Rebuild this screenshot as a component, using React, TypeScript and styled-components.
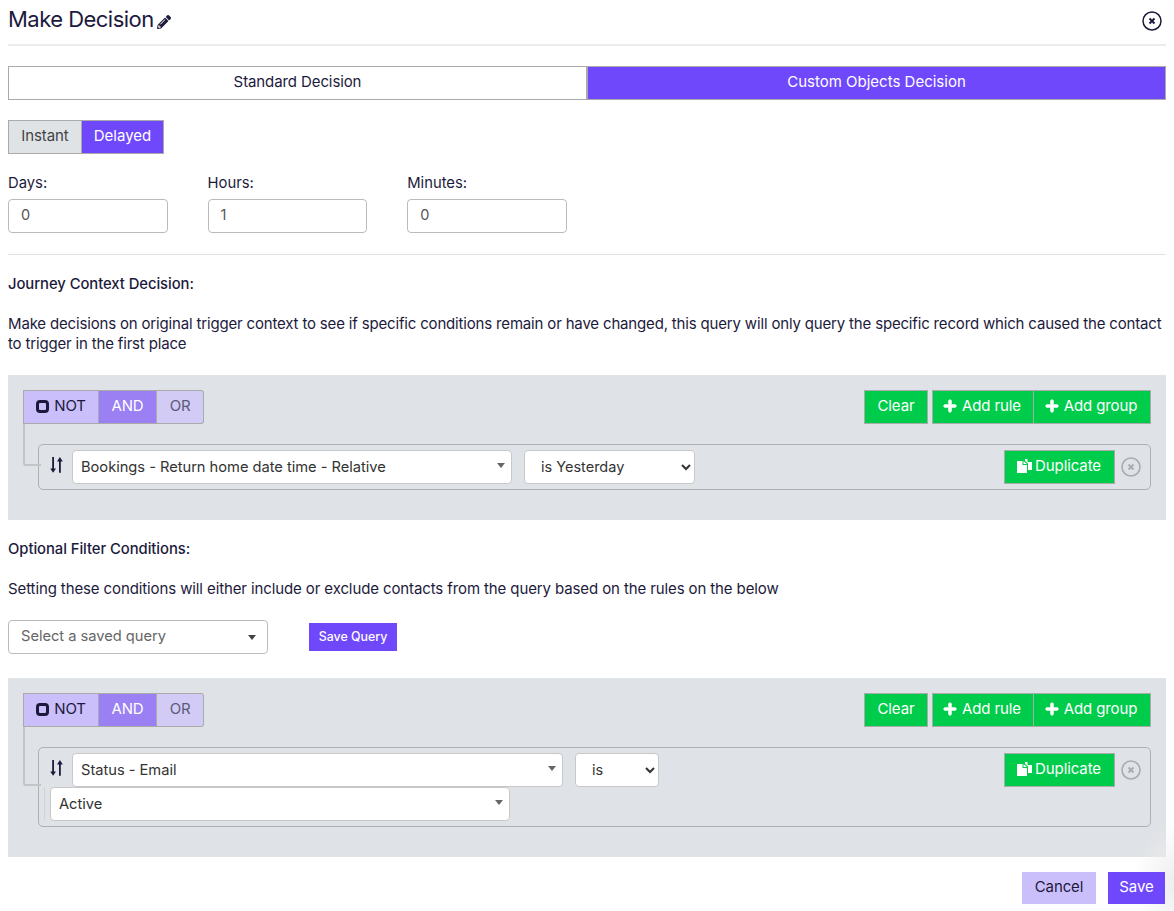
import * as React from 'react';
import styled, { createGlobalStyle } from 'styled-components';
import { FaPencilAlt, FaPlus } from 'react-icons/fa';

const GlobalStyle = createGlobalStyle`
  html, body {
    margin: 0;
    background: #fff;
  }
  body {
    font-family: Inter, "Liberation Sans", sans-serif;
    font-size: 15px;
    color: #1c1a3c;
  }
  * {
    box-sizing: border-box;
  }
`;

const Page = styled.div`
  position: relative;
  width: 1174px;
  height: 911px;
  padding: 0 8px;
  overflow: hidden;

  /* faint shade in the bottom right corner */
  &::after {
    content: '';
    position: absolute;
    right: 0;
    bottom: 0;
    width: 40px;
    height: 90px;
    background: radial-gradient(ellipse at 100% 70%, #eeeeee 0%, rgba(238, 238, 238, 0) 70%);
    pointer-events: none;
  }
`;

const TitleBar = styled.div`
  height: 46px;
  display: flex;
  align-items: flex-start;
  justify-content: space-between;
  border-bottom: 2px solid #ececec;
  padding-top: 5px;
`;

const Title = styled.h1`
  margin: 0;
  font-size: 22px;
  line-height: 28px;
  font-weight: 400;
  letter-spacing: -0.53px;
  display: flex;
  align-items: center;
  gap: 3px;

  svg {
    width: 14px;
    height: 14px;
    margin-top: 5px;
  }
`;

const CloseIcon = styled.svg`
  display: block;
  width: 20px;
  height: 20px;
  margin: 6px 4px 0 0;
`;

const Tabs = styled.div`
  display: flex;
  margin-top: 20px;
`;

const Tab = styled.div<{ $active?: boolean }>`
  flex: 1;
  height: 34px;
  padding-bottom: 3px;
  display: flex;
  align-items: center;
  justify-content: center;
  border: 1px solid #aaa;
  font-size: 15px;
  letter-spacing: ${p => (p.$active ? '0' : '-0.1px')};
  background: ${p => (p.$active ? '#7048fb' : '#fff')};
  color: ${p => (p.$active ? '#fff' : '#1c1a3c')};
`;

const Segments = styled.div`
  display: flex;
  margin-top: 20px;
`;

const Segment = styled.div<{ $active?: boolean }>`
  height: 34px;
  width: ${p => (p.$active ? '82px' : '74px')};
  padding-bottom: 3px;
  display: flex;
  align-items: center;
  justify-content: center;
  border: 1px solid #aaa;
  border-left-width: ${p => (p.$active ? '0' : '1px')};
  font-size: 15px;
  letter-spacing: ${p => (p.$active ? '0' : '-0.1px')};
  background: ${p => (p.$active ? '#7048fb' : '#dfe3e6')};
  color: ${p => (p.$active ? '#fff' : '#444')};
`;

const Delays = styled.div`
  display: flex;
  gap: 40px;
  margin-top: 20px;
`;

const Field = styled.div`
  width: 159.6px;
`;

const FieldLabel = styled.div`
  font-size: 14.8px;
  line-height: 18px;
  margin-bottom: 7px;
`;

const NumberBox = styled.div`
  height: 34px;
  border: 1px solid #bbb;
  border-radius: 4px;
  padding: 0 12px 3px;
  display: flex;
  align-items: center;
  font-size: 14.5px;
  color: #555;
`;

const Divider = styled.div`
  height: 1px;
  background: #e2e2e2;
  margin-top: 21px;
`;

const SectionTitle = styled.div<{ $top: number }>`
  margin-top: ${p => p.$top}px;
  font-size: 14.8px;
  line-height: 20px;
  font-weight: 500;
  letter-spacing: -0.05px;
`;

const Copy = styled.p<{ $spacing: number }>`
  margin: 20px 0 0;
  font-size: 15px;
  line-height: 20px;
  letter-spacing: ${p => p.$spacing}px;
`;

const Panel = styled.div<{ $top: number; $height: number }>`
  margin-top: ${p => p.$top}px;
  height: ${p => p.$height}px;
  background: #dfe2e6;
  padding: 15px;
`;

const GroupHeader = styled.div`
  display: flex;
  justify-content: space-between;
`;

const Joiners = styled.div`
  display: flex;
  height: 34px;
`;

const Joiner = styled.div<{ $kind: 'not' | 'and' | 'or' }>`
  display: flex;
  align-items: center;
  justify-content: center;
  gap: 5px;
  padding-bottom: 3px;
  border: 1px solid #aaa;
  border-left-width: ${p => (p.$kind === 'not' ? '1px' : '0')};
  border-radius: ${p => (p.$kind === 'or' ? '0 3px 3px 0' : '0')};
  font-size: 15px;
  letter-spacing: -0.2px;
  width: ${p => (p.$kind === 'not' ? '76px' : p.$kind === 'and' ? '58px' : '47px')};
  background: ${p => (p.$kind === 'not' ? '#cbbffb' : p.$kind === 'and' ? '#9a80f3' : '#d1cbf6')};
  color: ${p => (p.$kind === 'not' ? '#1c1a3c' : p.$kind === 'and' ? '#fff' : '#5c5a78')};
`;

const CheckMark = styled.span`
  width: 13px;
  height: 13px;
  margin-top: 2px;
  border: 3px solid #1c1a3c;
  border-radius: 4px;
`;

const Actions = styled.div`
  display: flex;
  gap: 4px;
`;

const ActionGroup = styled.div`
  display: flex;
`;

const GreenButton = styled.div<{ $width: number; $joined?: boolean }>`
  width: ${p => p.$width}px;
  height: 34px;
  padding-bottom: 3px;
  display: flex;
  align-items: center;
  justify-content: center;
  gap: 3px;
  background: #00cc4b;
  color: #fff;
  border: 1px solid #aaa;
  border-left-width: ${p => (p.$joined ? '0' : '1px')};
  font-size: 15px;
  letter-spacing: -0.1px;
`;

const PlusIcon = styled(FaPlus)`
  width: 14px;
  height: 14px;
  margin: 0 2px 0 -2px;
  stroke: #fff;
  stroke-width: 30px;
`;

const Rule = styled.div<{ $height: number }>`
  position: relative;
  height: ${p => p.$height}px;
  margin: 20px 0 0 15px;
  border: 1px solid #b0b0b0;
  border-radius: 5px;
  padding: 5px 9px 5px 10px;
  display: flex;
  align-items: flex-start;
  flex-wrap: wrap;

  &::before {
    content: '';
    position: absolute;
    left: -16px;
    top: -21px;
    bottom: calc(50% + 1px);
    width: 16px;
    border-left: 2px solid #c4c4c4;
    border-bottom: 2px solid #c4c4c4;
    border-bottom-left-radius: 3px;
  }
`;

const RuleLine = styled.div`
  display: flex;
  align-items: flex-start;
  width: 100%;
`;

const SortIcon = styled.svg`
  width: 13px;
  height: 16px;
  margin: 7px 9px 0 1px;
  flex: none;
`;

const Picker = styled.div<{ $width: number; $muted?: boolean }>`
  position: relative;
  flex: none;
  width: ${p => p.$width}px;
  height: 34px;
  background: #fff;
  border-radius: 4px;
  border: 1px solid #c8c8c8;
  display: flex;
  align-items: center;
  padding: 0 8px 1px;
  font-size: 14.7px;
  letter-spacing: -0.03px;
  color: ${p => (p.$muted ? '#666' : '#333')};

  &::after {
    content: '';
    position: absolute;
    right: 6px;
    top: 12px;
    border-left: 4px solid transparent;
    border-right: 4px solid transparent;
    border-top: 5px solid #666;
  }
`;

const SavedPicker = styled(Picker)`
  border-color: #bbb;
  padding: 0 12px 3px;

  &::after {
    right: 11px;
    top: 14px;
    border-top-color: #444;
  }
`;

const NativeSelect = styled.select<{ $width: number }>`
  flex: none;
  width: ${p => p.$width}px;
  height: 34px;
  margin-left: 12px;
  padding: 0 8px 2px 12px;
  background: #fff;
  border: 1px solid #c8c8c8;
  border-radius: 4px;
  font-family: inherit;
  font-size: 14.5px;
  color: #333;
`;

const RuleEnd = styled.div`
  margin-left: auto;
  display: flex;
  align-items: center;
  gap: 6px;
`;

const RemoveIcon = styled.svg`
  width: 20px;
  height: 20px;
`;

const DuplicateIcon = styled.svg`
  flex: none;
  width: 15px;
  height: 14px;
  margin-left: -1px;
`;

const SecondLine = styled.div`
  position: relative;
  width: 100%;
  padding-left: 1px;

  /* faint guide left of the wrapped value */
  &::before {
    content: '';
    position: absolute;
    left: -5px;
    top: 0;
    bottom: 2px;
    width: 1px;
    background: #cfd2d6;
  }
`;

const QueryRow = styled.div`
  display: flex;
  align-items: center;
  margin-top: 21px;
  gap: 41px;
`;

const SmallButton = styled.div`
  width: 88px;
  height: 28px;
  padding-bottom: 2px;
  background: #7048fb;
  color: #fff;
  display: flex;
  align-items: center;
  justify-content: center;
  font-size: 12.4px;
  font-weight: 500;
`;

const Footer = styled.div`
  position: relative;
  z-index: 1;
  display: flex;
  justify-content: flex-end;
  gap: 12px;
  margin-top: 15px;
  padding-right: 1px;
`;

const FooterButton = styled.div<{ $primary?: boolean }>`
  height: 32px;
  width: ${p => (p.$primary ? '57px' : '74px')};
  padding-bottom: 3px;
  display: flex;
  align-items: center;
  justify-content: center;
  font-size: 15px;
  letter-spacing: -0.1px;
  background: ${p => (p.$primary ? '#7048fb' : '#cbbffb')};
  color: ${p => (p.$primary ? '#fff' : '#1c1a3c')};
`;

const Sort = () => (
  <SortIcon viewBox="0 0 13 16" fill="#1c1a3c">
    <path d="M2.200 0h1.800v11.500h2L3.100 15.800.2 11.500h2zM9 15.800h1.800V4.500h2L9.900 0 7 4.500h2z" />
  </SortIcon>
);

const Remove = () => (
  <RemoveIcon viewBox="0 0 20 20" fill="none" stroke="#a9abae">
    <circle cx="10" cy="10" r="9" strokeWidth="1.6" />
    <path d="M7.500 7.500l5 5M12.500 7.500l-5 5" strokeWidth="1.8" />
  </RemoveIcon>
);

const Duplicate = () => (
  <DuplicateIcon viewBox="0 0 15 14" fill="#fff">
    <path d="M0 2h5.500v4H10v8H0zM6.500 2 10 5H6.500zM8 0h2.500v3H15v8h-4V4.500L8 1.800z" />
  </DuplicateIcon>
);

const GroupTop = () => (
  <GroupHeader>
    <Joiners>
      <Joiner $kind="not">
        <CheckMark />
        NOT
      </Joiner>
      <Joiner $kind="and">AND</Joiner>
      <Joiner $kind="or">OR</Joiner>
    </Joiners>
    <Actions>
      <GreenButton $width={64}>Clear</GreenButton>
      <ActionGroup>
        <GreenButton $width={102}>
          <PlusIcon />
          Add rule
        </GreenButton>
        <GreenButton $width={117} $joined>
          <PlusIcon />
          Add group
        </GreenButton>
      </ActionGroup>
    </Actions>
  </GroupHeader>
);

const RuleActions = () => (
  <RuleEnd>
    <GreenButton $width={111}>
      <Duplicate />
      Duplicate
    </GreenButton>
    <Remove />
  </RuleEnd>
);

export default function App() {
  return (
    <Page>
      <GlobalStyle />
      <TitleBar>
        <Title>
          Make Decision
          <FaPencilAlt />
        </Title>
        <CloseIcon viewBox="0 0 20 20" fill="none" stroke="#1c1a3c">
          <circle cx="10" cy="10" r="9" strokeWidth="1.5" />
          <path d="M7.500 7.500l5 5M12.500 7.500l-5 5" strokeWidth="2" />
        </CloseIcon>
      </TitleBar>

      <Tabs>
        <Tab>Standard Decision</Tab>
        <Tab $active>Custom Objects Decision</Tab>
      </Tabs>

      <Segments>
        <Segment>Instant</Segment>
        <Segment $active>Delayed</Segment>
      </Segments>

      <Delays>
        <Field>
          <FieldLabel>Days:</FieldLabel>
          <NumberBox>0</NumberBox>
        </Field>
        <Field>
          <FieldLabel>Hours:</FieldLabel>
          <NumberBox>1</NumberBox>
        </Field>
        <Field>
          <FieldLabel>Minutes:</FieldLabel>
          <NumberBox>0</NumberBox>
        </Field>
      </Delays>

      <Divider />

      <SectionTitle $top={19}>Journey Context Decision:</SectionTitle>
      <Copy $spacing={-0.17}>
        Make decisions on original trigger context to see if specific conditions remain or have changed, this query will
        only query the specific record which caused the contact to trigger in the first place
      </Copy>

      <Panel $top={21} $height={145}>
        <GroupTop />
        <Rule $height={46}>
          <RuleLine>
            <Sort />
            <Picker $width={440}>Bookings - Return home date time - Relative</Picker>
            <NativeSelect $width={171} defaultValue="yesterday">
              <option value="yesterday">is Yesterday</option>
            </NativeSelect>
            <RuleActions />
          </RuleLine>
        </Rule>
      </Panel>

      <SectionTitle $top={19}>Optional Filter Conditions:</SectionTitle>
      <Copy $spacing={-0.11}>
        Setting these conditions will either include or exclude contacts from the query based on the rules on the below
      </Copy>

      <QueryRow>
        <SavedPicker $width={260} $muted>
          Select a saved query
        </SavedPicker>
        <SmallButton>Save Query</SmallButton>
      </QueryRow>

      <Panel $top={24} $height={179}>
        <GroupTop />
        <Rule $height={80}>
          <RuleLine>
            <Sort />
            <Picker $width={491}>Status - Email</Picker>
            <NativeSelect $width={84} defaultValue="is">
              <option value="is">is</option>
            </NativeSelect>
            <RuleActions />
          </RuleLine>
          <SecondLine>
            <Picker $width={460}>Active</Picker>
          </SecondLine>
        </Rule>
      </Panel>

      <Footer>
        <FooterButton>Cancel</FooterButton>
        <FooterButton $primary>Save</FooterButton>
      </Footer>
    </Page>
  );
}
